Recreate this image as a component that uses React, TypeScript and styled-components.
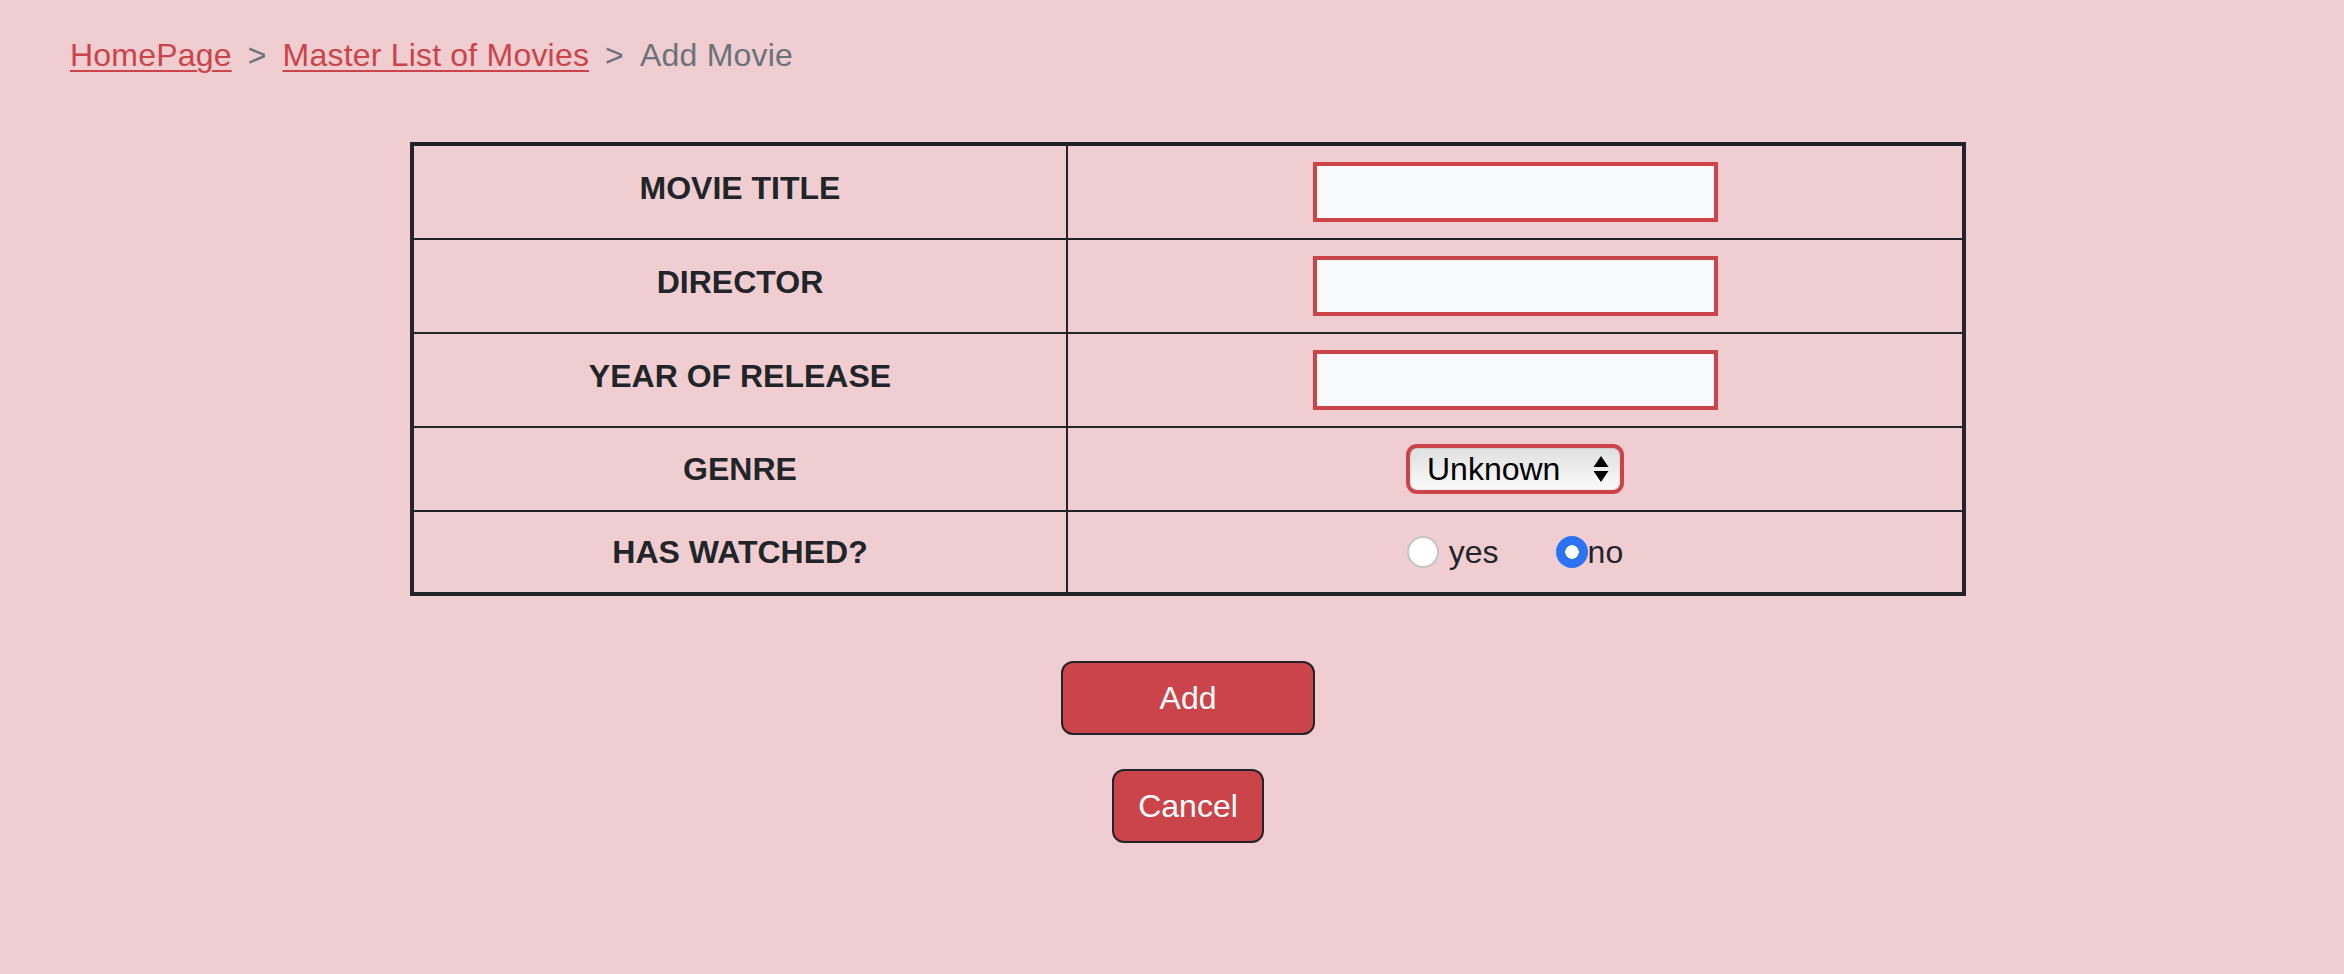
import React from "react";
import styled, { createGlobalStyle } from "styled-components";

const GlobalStyle = createGlobalStyle`
  * { box-sizing: border-box; }
  html, body {
    margin: 0;
    padding: 0;
    background: #f0cdd1;
  }
  body {
    font-family: "Liberation Sans", Arial, sans-serif;
    font-size: 32px;
    line-height: 48px;
    color: #212529;
  }
`;

const Page = styled.div`
  min-height: 974px;
  background: #f0cdd1;
  padding-top: 31px;
`;

const Crumbs = styled.ol`
  display: flex;
  list-style: none;
  margin: 0;
  padding: 0 0 0 70px;
  letter-spacing: 0.2px;
`;

const Crumb = styled.li<{ $active?: boolean }>`
  color: ${(p) => (p.$active ? "#6b737a" : "#cb444a")};
  &:not(:first-child) {
    padding-left: 16px;
  }
  &:not(:first-child)::before {
    content: ">";
    color: #6b737a;
    padding-right: 16px;
  }
`;

const CrumbLink = styled.a`
  color: #cb444a;
  text-decoration: underline;
  text-decoration-thickness: 2px;
  text-underline-offset: 4px;
`;

const FormArea = styled.main`
  margin: 63px 0 0 410px;
  width: 1556px;
  display: flex;
  flex-direction: column;
  align-items: center;
`;

const Table = styled.table`
  width: 1556px;
  table-layout: fixed;
  border: 4px solid #212529;
  border-collapse: separate;
  border-spacing: 0;
`;

const LabelCell = styled.th<{ $last?: boolean; $raised?: boolean }>`
  padding: ${(p) => (p.$raised ? "12px 16px 20px" : "16px")};
  text-align: center;
  vertical-align: middle;
  font-weight: 700;
  border-right: 2px solid #212529;
  border-bottom: ${(p) => (p.$last ? "none" : "2px solid #212529")};
`;

const FieldCell = styled.td<{ $last?: boolean }>`
  padding: 16px;
  text-align: center;
  vertical-align: middle;
  border-bottom: ${(p) => (p.$last ? "none" : "2px solid #212529")};
`;

const TextInput = styled.input`
  display: block;
  margin: 0 auto;
  width: 405px;
  height: 60px;
  border: 4px solid #cb444a;
  border-radius: 0;
  background: #f8f9fa;
  font: inherit;
  padding: 0 12px;
  outline: none;
`;

const SelectWrap = styled.div`
  position: relative;
  width: 218px;
  height: 50px;
  margin: 0 auto;
`;

const Select = styled.select`
  appearance: none;
  -webkit-appearance: none;
  width: 218px;
  height: 50px;
  border: 4px solid #cb444a;
  border-radius: 11px;
  background: linear-gradient(to bottom, #e0e0e0 0%, #ebebeb 45%, #f6f6f6 80%, #fbfbfb 100%);
  box-shadow: inset 0 0 2px rgba(0, 0, 0, 0.25);
  font-family: "Liberation Sans", Arial, sans-serif;
  font-size: 32px;
  line-height: 42px;
  color: #000;
  padding: 0 0 0 17px;
  outline: none;
`;

const Arrows = styled.svg`
  position: absolute;
  right: 15px;
  top: 12px;
  width: 16px;
  height: 26px;
  pointer-events: none;
`;

const RadioGroup = styled.div`
  display: flex;
  justify-content: center;
  align-items: center;
  height: 48px;
`;

const RadioLabel = styled.label<{ $gap: number; $after?: number }>`
  display: flex;
  align-items: center;
  gap: ${(p) => p.$gap}px;
  margin-right: ${(p) => p.$after ?? 0}px;
  color: #212529;
`;

const Radio = styled.input`
  appearance: none;
  -webkit-appearance: none;
  margin: 0;
  width: 32px;
  height: 32px;
  border-radius: 50%;
  border: 2px solid #c4c4c4;
  background: #fff;
  &:checked {
    border: none;
    background: radial-gradient(circle, #fff 0 6.5px, #2b74f3 7px);
  }
`;

const Actions = styled.div`
  margin-top: 65px;
  display: flex;
  flex-direction: column;
  align-items: center;
  gap: 34px;
`;

const Button = styled.button<{ $width?: number }>`
  ${(p) => (p.$width ? `width: ${p.$width}px;` : "")}
  height: 74px;
  padding: 11px 24px;
  border: 2px solid #212529;
  border-radius: 12px;
  background: #cb444a;
  color: #fff;
  font-family: "Liberation Sans", Arial, sans-serif;
  font-size: 32px;
  line-height: 48px;
`;

export default function App() {
  return (
    <>
      <GlobalStyle />
      <Page>
        <nav aria-label="breadcrumb">
          <Crumbs>
            <Crumb>
              <CrumbLink href="#">HomePage</CrumbLink>
            </Crumb>
            <Crumb>
              <CrumbLink href="#">Master List of Movies</CrumbLink>
            </Crumb>
            <Crumb $active>Add Movie</Crumb>
          </Crumbs>
        </nav>
        <FormArea>
          <Table>
            <colgroup>
              <col style={{ width: 654 }} />
              <col style={{ width: 894 }} />
            </colgroup>
            <tbody>
              <tr>
                <LabelCell $raised>MOVIE TITLE</LabelCell>
                <FieldCell>
                  <TextInput type="text" aria-label="Movie title" />
                </FieldCell>
              </tr>
              <tr>
                <LabelCell $raised>DIRECTOR</LabelCell>
                <FieldCell>
                  <TextInput type="text" aria-label="Director" />
                </FieldCell>
              </tr>
              <tr>
                <LabelCell $raised>YEAR OF RELEASE</LabelCell>
                <FieldCell>
                  <TextInput type="text" aria-label="Year of release" />
                </FieldCell>
              </tr>
              <tr>
                <LabelCell>GENRE</LabelCell>
                <FieldCell>
                  <SelectWrap>
                    <Select defaultValue="Unknown" aria-label="Genre">
                      <option>Unknown</option>
                      <option>Action</option>
                      <option>Comedy</option>
                      <option>Drama</option>
                    </Select>
                    <Arrows viewBox="0 0 16 26">
                      <path d="M8 0 L15.5 11 L0.5 11 Z" fill="#000" />
                      <path d="M8 26 L15.5 15 L0.5 15 Z" fill="#000" />
                    </Arrows>
                  </SelectWrap>
                </FieldCell>
              </tr>
              <tr>
                <LabelCell $last>HAS WATCHED?</LabelCell>
                <FieldCell $last>
                  <RadioGroup>
                    <RadioLabel $gap={10} $after={57}>
                      <Radio type="radio" name="watched" value="yes" />
                      yes
                    </RadioLabel>
                    <RadioLabel $gap={0}>
                      <Radio type="radio" name="watched" value="no" defaultChecked />
                      no
                    </RadioLabel>
                  </RadioGroup>
                </FieldCell>
              </tr>
            </tbody>
          </Table>
          <Actions>
            <Button $width={254}>Add</Button>
            <Button>Cancel</Button>
          </Actions>
        </FormArea>
      </Page>
    </>
  );
}
